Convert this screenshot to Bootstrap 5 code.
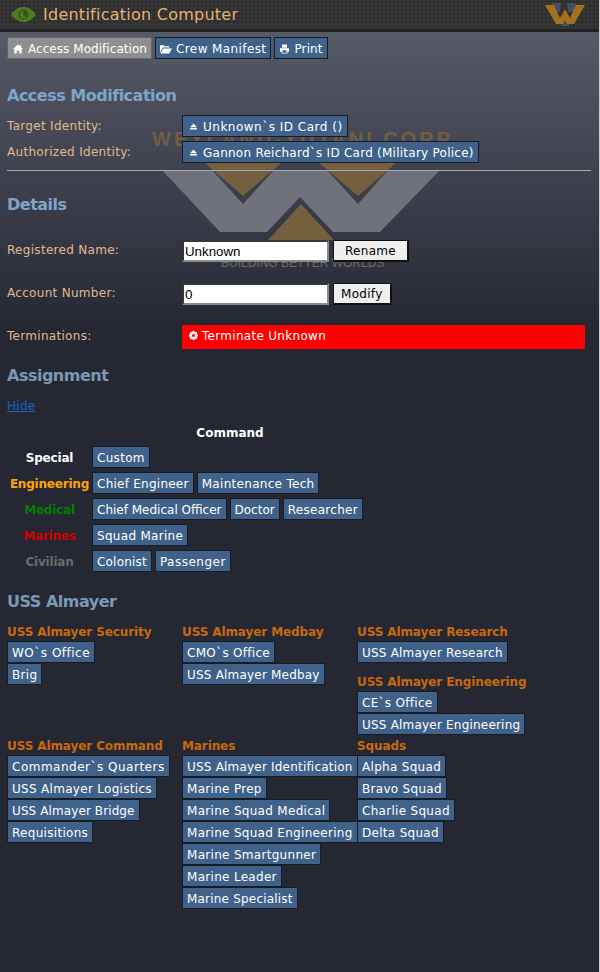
<!DOCTYPE html>
<html lang="en">
<head>
    <meta charset="UTF-8">
    <meta name="viewport" content="width=device-width, initial-scale=1.0">
    <title>Identification Computer</title>
    <link href="https://cdn.jsdelivr.net/npm/bootstrap@5.3.0/dist/css/bootstrap.min.css" rel="stylesheet">
    <style>
        html, body { height: 972px; overflow: hidden; }
        body { background: #252733; font-family: "DejaVu Sans", Verdana, sans-serif; font-size: 12px; line-height: 16px; color: #fff; letter-spacing: .3px; }
        .screen { position: relative; width: 599px; height: 972px; background: linear-gradient(to bottom, #5c5f6c 0, #252733 330px); }
        .edge { position: absolute; top: 0; right: -1px; width: 1px; height: 972px; background: #c8ccd2; }
        .title-bar { height: 32px; background-color: #353535; background-image: radial-gradient(#2a2a2a 1px, transparent 1px); background-size: 4px 4px; border-bottom: 3px solid #222; color: #e3b272; font-size: 16px; letter-spacing: .25px; padding-left: 11px; gap: 7px; }
        .title-bar span { padding-top: 1px; }
        .title-logo { margin-left: auto; margin-right: 14px; margin-top: 1px; }
        .backdrop { position: absolute; left: 0; top: 0; z-index: 0; }
        .wm-top { font: bold 20px "Liberation Sans", Arial, sans-serif; fill: #705f42; letter-spacing: 3px; }
        .wm-bottom { font: 12px "Liberation Sans", Arial, sans-serif; fill: #6a6c76; letter-spacing: 0; }
        .content { position: relative; z-index: 1; padding: 5px 7px 0; }
        .ctl { display: inline-flex; align-items: center; gap: 4px; height: 22px; padding: 1px 4px 0; background: #40628a; border: 1px solid #161b24; color: #fff; white-space: nowrap; }
        .ctl.on { background: #8f8f8f; border-color: #646464; }
        .ctl.danger { background: #f00; border: 0; height: 24px; width: 403px; padding: 0 6px 3px 7px; gap: 4px; }
        .sp-0 { letter-spacing: 0; }
        .sp-05 { letter-spacing: .05px; }
        .sp-1 { letter-spacing: .1px; }
        .sp-2 { letter-spacing: .2px; }
        .sp-25 { letter-spacing: .25px; }
        .sp-4 { letter-spacing: .4px; }
        .sp-5 { letter-spacing: .5px; }
        .ico-pad { margin: 0 1px; }
        .eject { margin: 0 2px 0 3px; }
        .sec-title { font-size: 16px; line-height: 20px; font-weight: bold; color: #7fa5cb; letter-spacing: -.5px; margin: 0; }
        .sec-title.dim { color: #7b98b5; }
        .lbl { width: 175px; color: #e0b98c; flex: none; }
        .lbl.raised { padding-bottom: 2px; }
        .rule { height: 1px; background: #a9a9a9; margin: 7px 1px 0 0; }
        .field { width: 147px; height: 22px; font: 13.3px "Liberation Sans", Arial, sans-serif; letter-spacing: 0; padding: 1px 0 1px 1px; border: 2px inset #8a8a8a; background: #fff; color: #000; }
        .push { height: 22px; padding: 0 7px; background: #efefef; border: 2px solid #111; border-width: 1px 2px 2px 1px; color: #000; font-size: 12px; line-height: 18px; margin-left: 4px; letter-spacing: .3px; }
        .push.wide { padding: 0 11px; }
        .hide-link { color: #1b62c4; }
        .cmd-head { font-weight: bold; letter-spacing: 0; width: 446px; text-align: center; margin: 11px 0 5px; }
        .job-row { height: 22px; margin-bottom: 4px; }
        .job-name { width: 85px; text-align: center; font-weight: bold; letter-spacing: -.2px; flex: none; padding-top: 2px; }
        .jobs { gap: 3px; }
        .region-grid { display: grid; grid-template-columns: 175px 175px 175px; grid-template-rows: 114px auto; margin-top: 12px; }
        .region-name { color: #c86a0d; font-weight: bold; letter-spacing: -.1px; line-height: 16px; height: 16px; margin-bottom: 1px; }
        .stack { display: flex; flex-direction: column; align-items: flex-start; }
        .stack.spaced { margin-bottom: 11px; }
    </style>
</head>
<body>
    <div class="screen">
        <svg class="backdrop" width="600" height="300" viewBox="0 0 600 300">
            <text class="wm-top" x="152" y="146">WEYLAND-YUTANI CORP</text>
            <path fill="#74603f" d="M190 150H296L243 196zM304 150H411L358 196zM301 204L268 240H334z"/>
            <path fill="#6f717b" d="M162 170h50l31 34 31-34h53l31 34 30-34h52l-60 62h-47l-33-35-33 35h-47z"/>
            <text class="wm-bottom" x="221" y="267">BUILDING BETTER WORLDS</text>
        </svg>

        <div class="title-bar d-flex align-items-center position-relative">
            <svg width="25" height="15" viewBox="0 0 25 15"><path fill="#4f7a1f" d="M0 7.500C4 2 8 0 12.500 0S21 2 25 7.500C21 13 17 15 12.500 15S4 13 0 7.500z"/><circle cx="12.500" cy="7.500" r="5" fill="#38531c"/><path fill="#4f7a1f" d="M13 4a3.700 3.700 0 1 0 3 5.500 3.200 3.200 0 0 1-3-5.500z"/></svg>
            <span>Identification Computer</span>
            <svg class="title-logo" width="40" height="24" viewBox="0 0 40 24"><path fill="#3f5068" d="M7 0h9l-1 9H9zM22 0h9l-2 9h-6zM16 13h8v10h-8z"/><path fill="#a5701e" d="M0 2h9l6 13 5-9 5 9 6-13h9L29 21h-7l-2-4-2 4h-7z"/></svg>
        </div>

        <div class="content">
            <div class="d-flex" style="gap:3px">
                <span class="ctl on sp-05"><svg class="ico-pad" width="10" height="10" viewBox="0 0 12 11"><path fill="#fff" d="M6 0l2 1.800V1h1.500v2.200L12 5.500h-1.500V11H7.500V7.500h-3V11H1.500V5.500H0z"/></svg>Access Modification</span>
                <span class="ctl sp-4"><svg width="12" height="10" viewBox="0 0 13 10"><path fill="#fff" d="M0 1h4l1 1h5v1.500H3L0 9zM3.500 4.500H13L10 10H.5z"/></svg>Crew Manifest</span>
                <span class="ctl sp-1"><svg class="ico-pad" width="9" height="10" viewBox="0 0 11 11"><path fill="#fff" d="M2.500 0h6v4h-6zM0 4.500h11V9H9v2H2V9H0zM3 7v3h5V7z"/></svg>Print</span>
            </div>

            <h2 class="sec-title" style="margin-top:27px">Access Modification</h2>
            <div class="d-flex align-items-center" style="margin-top:9px"><span class="lbl">Target Identity:</span><span class="ctl sp-5"><svg class="eject" width="7" height="7" viewBox="0 0 9 8"><path fill="#fff" d="M4.500 0L9 5H0zM0 6h9v2H0z"/></svg>Unknown`s ID Card ()</span></div>
            <div class="d-flex align-items-center" style="margin-top:4px"><span class="lbl">Authorized Identity:</span><span class="ctl"><svg class="eject" width="7" height="7" viewBox="0 0 9 8"><path fill="#fff" d="M4.500 0L9 5H0zM0 6h9v2H0z"/></svg><span class="sp-25">Gannon Reichard`s ID Card (Military Police)</span></span></div>
            <div class="rule"></div>

            <h2 class="sec-title" style="margin-top:24px">Details</h2>
            <div class="d-flex align-items-center" style="margin-top:25px"><span class="lbl raised">Registered Name:</span><input class="field" value="Unknown"><button class="push wide">Rename</button></div>
            <div class="d-flex align-items-center" style="margin-top:21px"><span class="lbl raised">Account Number:</span><input class="field" value="0"><button class="push">Modify</button></div>
            <div class="d-flex align-items-center" style="margin-top:20px"><span class="lbl raised">Terminations:</span><span class="ctl danger"><svg width="9" height="9" viewBox="0 0 10 10"><path fill="#fff" d="M4 0h2l.4 1.500 1.400-.7 1.400 1.400-.7 1.400L10 4v2l-1.500.4.700 1.400-1.400 1.400-1.400-.7L6 10H4l-.4-1.500-1.400.7L.8 7.800l.7-1.400L0 6V4l1.500-.4-.7-1.400L2.200.8l1.400.7zM3.500 3.500v3h3v-3z"/></svg>Terminate Unknown</span></div>

            <h2 class="sec-title dim" style="margin-top:17px">Assignment</h2>
            <a href="#" class="hide-link d-inline-block" style="margin-top:12px">Hide</a>
            <div class="cmd-head">Command</div>
            <div class="job-row d-flex align-items-center"><span class="job-name text-white">Special</span><div class="jobs d-flex"><span class="ctl">Custom</span></div></div>
            <div class="job-row d-flex align-items-center"><span class="job-name" style="color:#ffa500">Engineering</span><div class="jobs d-flex"><span class="ctl sp-25">Chief Engineer</span><span class="ctl">Maintenance Tech</span></div></div>
            <div class="job-row d-flex align-items-center"><span class="job-name" style="color:#008000">Medical</span><div class="jobs d-flex"><span class="ctl sp-0">Chief Medical Officer</span><span class="ctl sp-0">Doctor</span><span class="ctl">Researcher</span></div></div>
            <div class="job-row d-flex align-items-center"><span class="job-name" style="color:#d00000">Marines</span><div class="jobs d-flex"><span class="ctl">Squad Marine</span></div></div>
            <div class="job-row d-flex align-items-center"><span class="job-name" style="color:#6b6b6b">Civilian</span><div class="jobs d-flex"><span class="ctl sp-2">Colonist</span><span class="ctl sp-5">Passenger</span></div></div>

            <h2 class="sec-title dim" style="margin-top:20px">USS Almayer</h2>
            <div class="region-grid">
                <div>
                    <div class="region-name">USS Almayer Security</div>
                    <div class="stack"><span class="ctl sp-5">WO`s Office</span><span class="ctl">Brig</span></div>
                </div>
                <div>
                    <div class="region-name">USS Almayer Medbay</div>
                    <div class="stack"><span class="ctl">CMO`s Office</span><span class="ctl sp-2">USS Almayer Medbay</span></div>
                </div>
                <div>
                    <div class="region-name">USS Almayer Research</div>
                    <div class="stack spaced"><span class="ctl sp-2">USS Almayer Research</span></div>
                    <div class="region-name">USS Almayer Engineering</div>
                    <div class="stack"><span class="ctl">CE`s Office</span><span class="ctl sp-2">USS Almayer Engineering</span></div>
                </div>
                <div>
                    <div class="region-name">USS Almayer Command</div>
                    <div class="stack"><span class="ctl sp-5">Commander`s Quarters</span><span class="ctl">USS Almayer Logistics</span><span class="ctl sp-1">USS Almayer Bridge</span><span class="ctl">Requisitions</span></div>
                </div>
                <div>
                    <div class="region-name">Marines</div>
                    <div class="stack"><span class="ctl sp-2">USS Almayer Identification</span><span class="ctl">Marine Prep</span><span class="ctl">Marine Squad Medical</span><span class="ctl">Marine Squad Engineering</span><span class="ctl">Marine Smartgunner</span><span class="ctl">Marine Leader</span><span class="ctl sp-2">Marine Specialist</span></div>
                </div>
                <div>
                    <div class="region-name">Squads</div>
                    <div class="stack"><span class="ctl">Alpha Squad</span><span class="ctl">Bravo Squad</span><span class="ctl">Charlie Squad</span><span class="ctl">Delta Squad</span></div>
                </div>
            </div>
        </div>
        <div class="edge"></div>
    </div>
    <script src="https://cdn.jsdelivr.net/npm/bootstrap@5.3.0/dist/js/bootstrap.bundle.min.js"></script>
</body>
</html>
